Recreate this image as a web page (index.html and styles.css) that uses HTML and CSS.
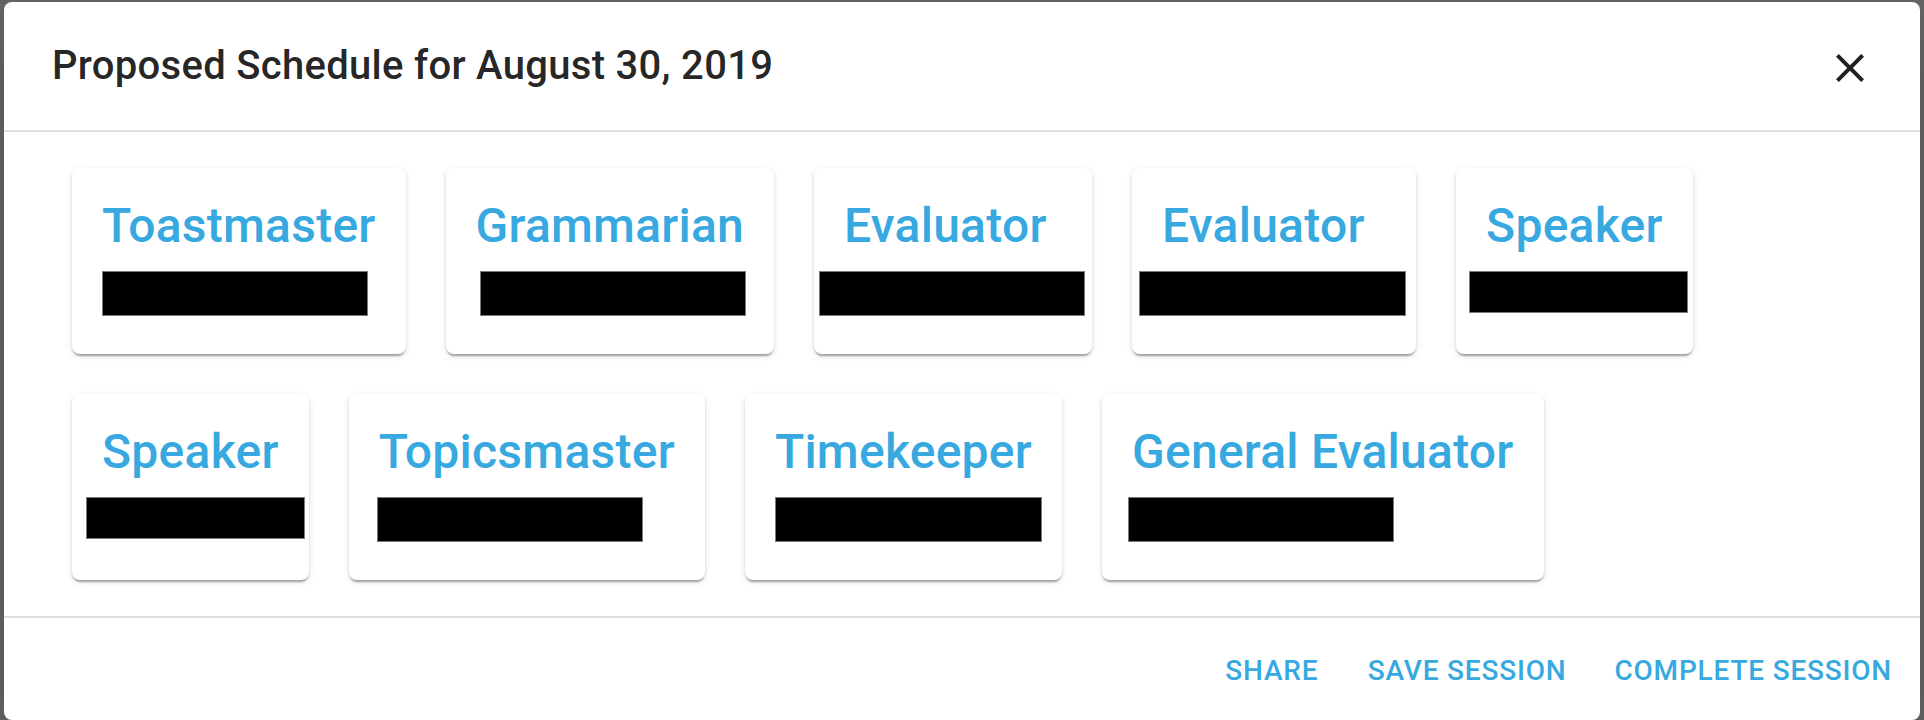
FILE: index.html
```html
<!DOCTYPE html>
<html lang="en">
<head>
<meta charset="utf-8">
<title>Proposed Schedule</title>
<link rel="stylesheet" href="styles.css">
</head>
<body>
<div class="backdrop">
  <div class="dialog" role="dialog">
    <header class="dialog-header">
      <h2 class="dialog-title">Proposed Schedule for August 30, 2019</h2>
      <button class="close-btn" aria-label="Close">
        <svg viewBox="0 0 24 24" class="close-icon"><path d="M19 6.41L17.59 5 12 10.59 6.41 5 5 6.41 10.59 12 5 17.59 6.41 19 12 13.41 17.59 19 19 17.59 13.41 12z"/></svg>
      </button>
    </header>
    <section class="dialog-content">
      <div class="roles">
        <div class="role-card">
          <div class="role-title">Toastmaster</div>
          <div class="role-name" style="width:200px"><span class="redact" style="margin-left:0px;width:266px"></span></div>
        </div>
        <div class="role-card">
          <div class="role-title">Grammarian</div>
          <div class="role-name" style="width:200px"><span class="redact" style="margin-left:4px;width:266px"></span></div>
        </div>
        <div class="role-card">
          <div class="role-title">Evaluator</div>
          <div class="role-name" style="width:218px"><span class="redact" style="margin-left:-25px;width:266px"></span></div>
        </div>
        <div class="role-card">
          <div class="role-title">Evaluator</div>
          <div class="role-name" style="width:224px"><span class="redact" style="margin-left:-23px;width:267px"></span></div>
        </div>
        <div class="role-card">
          <div class="role-title">Speaker</div>
          <div class="role-name" style="width:150px"><span class="redact redact-sm" style="margin-left:-17px;width:219px"></span></div>
        </div>
        <div class="role-card">
          <div class="role-title">Speaker</div>
          <div class="role-name" style="width:150px"><span class="redact redact-sm2" style="margin-left:-16px;width:219px"></span></div>
        </div>
        <div class="role-card">
          <div class="role-title">Topicsmaster</div>
          <div class="role-name" style="width:200px"><span class="redact redact-low" style="margin-left:-2px;width:266px"></span></div>
        </div>
        <div class="role-card">
          <div class="role-title">Timekeeper</div>
          <div class="role-name" style="width:200px"><span class="redact redact-low" style="margin-left:0px;width:267px"></span></div>
        </div>
        <div class="role-card">
          <div class="role-title">General Evaluator</div>
          <div class="role-name" style="width:200px"><span class="redact redact-low" style="margin-left:-4px;width:266px"></span></div>
        </div>
      </div>
    </section>
    <footer class="dialog-actions">
      <button class="action-btn">Share</button>
      <button class="action-btn">Save Session</button>
      <button class="action-btn">Complete Session</button>
    </footer>
  </div>
</div>
</body>
</html>
```
FILE: styles.css
```css
html, body {
  margin: 0;
  padding: 0;
  height: 100%;
  overflow: hidden;
  background: #666666;
}

.backdrop {
  padding: 2px 4px 0 4px;
  font-family: Roboto, "Liberation Sans", Arial, sans-serif;
}

.dialog {
  width: 1916px;
  background: #ffffff;
  border-radius: 8px;
  box-shadow: 0 22px 70px rgba(0, 0, 0, 0.2);
}

.dialog-header {
  display: flex;
  align-items: center;
  justify-content: space-between;
  padding: 32px 22px 32px 48px;
  height: 64px;
}

.dialog-title {
  margin: 0;
  font-size: 40px;
  font-weight: 500;
  line-height: 64px;
  letter-spacing: 0.3px;
  color: rgba(0, 0, 0, 0.87);
}

.close-btn {
  width: 96px;
  height: 96px;
  padding: 24px;
  margin-top: 3px;
  border: none;
  background: none;
  display: flex;
  align-items: center;
  justify-content: center;
}

.close-icon {
  width: 48px;
  height: 48px;
  fill: #212121;
}

.dialog-content {
  border-top: 2px solid #e0e0e0;
  border-bottom: 2px solid #e0e0e0;
  padding: 16px 48px;
}

.roles {
  display: flex;
  flex-wrap: wrap;
}

.role-card {
  margin: 20px;
  padding: 32px 30px 38px 30px;
  background: #ffffff;
  border-radius: 8px;
  box-shadow: 0 4px 2px -2px rgba(0, 0, 0, 0.2), 0 2px 2px 0 rgba(0, 0, 0, 0.14), 0 2px 6px 0 rgba(0, 0, 0, 0.12);
}

.role-title {
  font-size: 48px;
  font-weight: 500;
  line-height: 52px;
  letter-spacing: 0.25px;
  color: #37a9e0;
  white-space: nowrap;
}

.role-name {
  margin-top: 19px;
  height: 45px;
}

.redact {
  display: block;
  height: 45px;
  box-sizing: border-box;
  background: #000000;
  border: 1px solid #7c7c7c;
}

.redact-sm {
  height: 42px;
  margin-top: 1px;
}

.redact-sm2 {
  height: 42px;
  margin-top: 3px;
}

.redact-low {
  margin-top: 2px;
}

.dialog-actions {
  display: flex;
  justify-content: flex-end;
  padding: 16px 12px 13px 16px;
}

.action-btn {
  margin-left: 16px;
  min-width: 128px;
  padding: 12px 16px;
  border: none;
  background: none;
  font-family: Roboto, "Liberation Sans", Arial, sans-serif;
  font-size: 28px;
  font-weight: 500;
  line-height: 49px;
  letter-spacing: 0.8px;
  text-transform: uppercase;
  color: #37a9e0;
}
```
